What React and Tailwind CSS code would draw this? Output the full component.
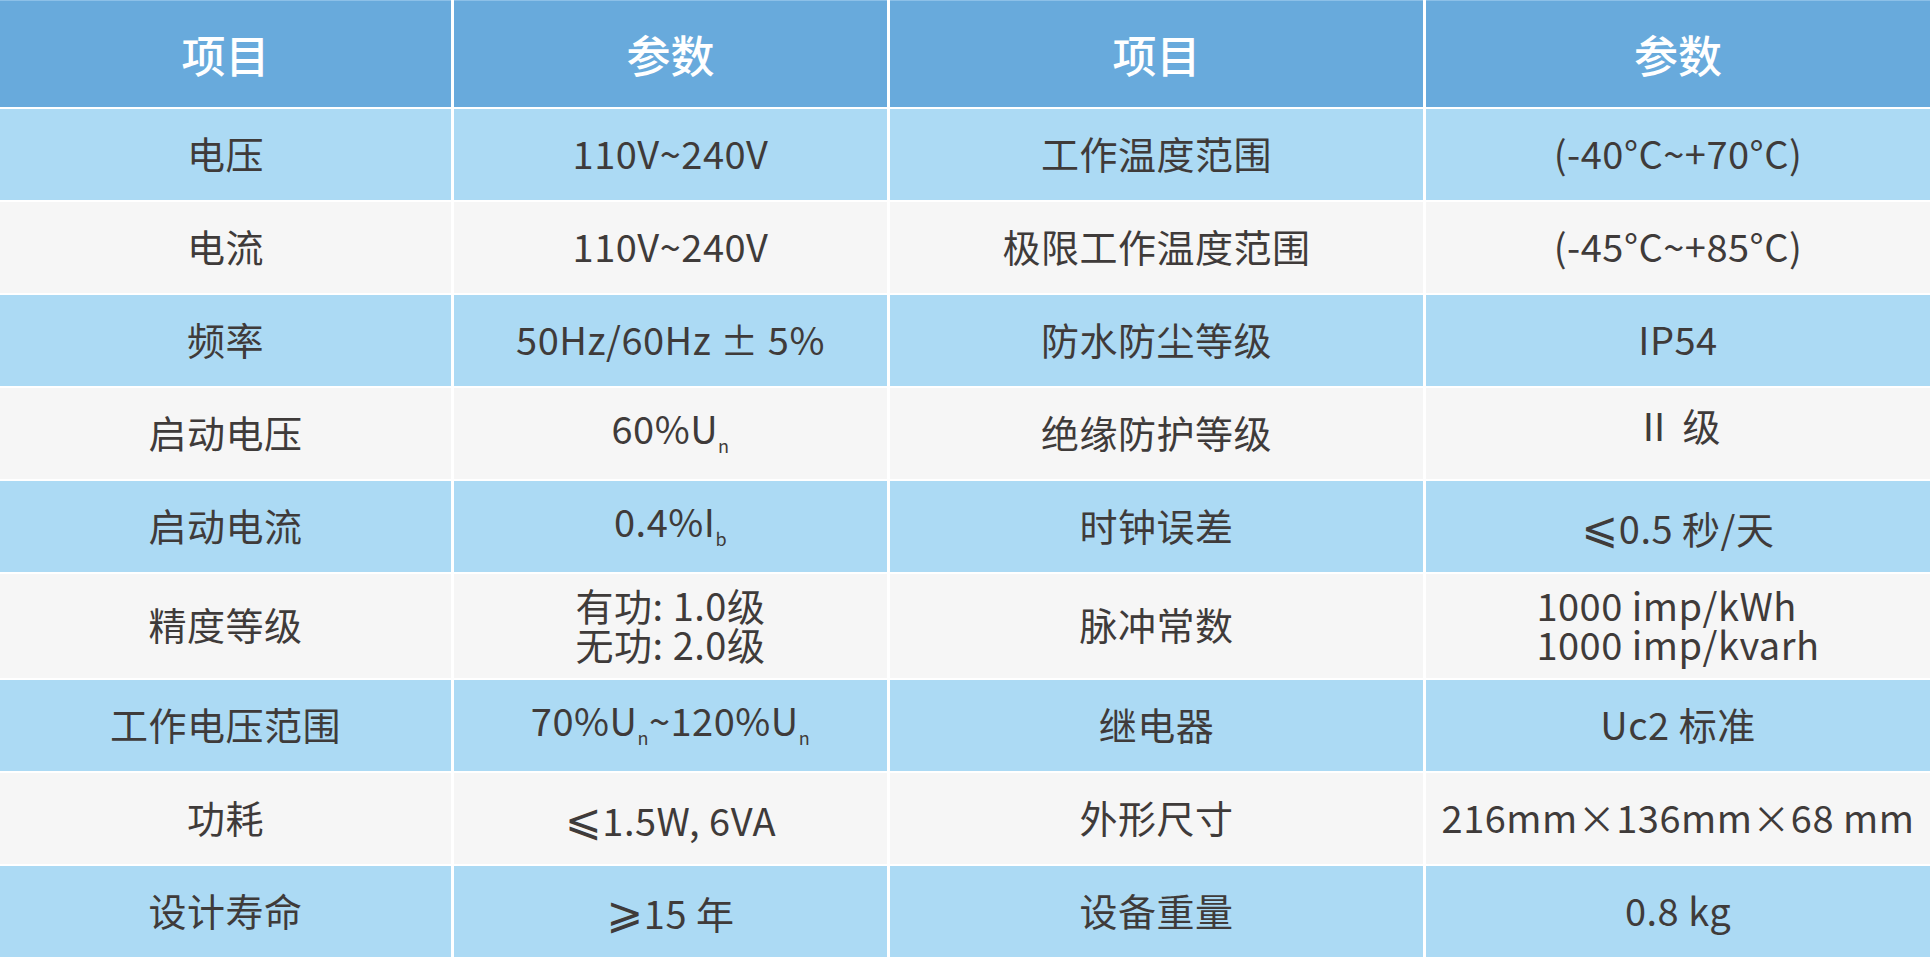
import React from "react";

const Sub = ({ children }) => (
  <span className="text-[18px] align-[-9px] leading-none">{children}</span>
);

const Le = ({ ch }) => (
  <span className="text-[44px] leading-none align-[1px]">{ch}</span>
);

const rows = [
  ["电压", "110V~240V", "工作温度范围", "(-40°C~+70°C)"],
  ["电流", "110V~240V", "极限工作温度范围", "(-45°C~+85°C)"],
  ["频率", "50Hz/60Hz ± 5%", "防水防尘等级", "IP54"],
  [
    "启动电压",
    <span>60%U<Sub>n</Sub></span>,
    "绝缘防护等级",
    <span className="pb-[14px] block">Ⅱ 级</span>,
  ],
  ["启动电流", <span>0.4%I<Sub>b</Sub></span>, "时钟误差", <span><Le ch="⩽" />0.5 秒/天</span>],
  [
    "精度等级",
    <span className="inline-block leading-[39px]">有功: 1.0级<br />无功: 2.0级</span>,
    "脉冲常数",
    <span className="inline-block text-left leading-[39px]">1000 imp/kWh<br />1000 imp/kvarh</span>,
  ],
  [
    "工作电压范围",
    <span>70%U<Sub>n</Sub>~120%U<Sub>n</Sub></span>,
    "继电器",
    "Uc2 标准",
  ],
  ["功耗", <span><Le ch="⩽" />1.5W, 6VA</span>, "外形尺寸", "216mm×136mm×68 mm"],
  ["设计寿命", <span><Le ch="⩾" />15 年</span>, "设备重量", "0.8 kg"],
];

export default function App() {
  return (
    <div
      className="w-[1930px] h-[959px] bg-white"
      style={{ fontFamily: '"Noto Sans CJK SC", "Noto Sans", "DejaVu Sans", sans-serif' }}
    >
      <div className="grid grid-cols-[451px_433px_533px_504px] gap-x-[3px] gap-y-[2px] bg-white">
        {["项目", "参数", "项目", "参数"].map((h, i) => (
          <div
            key={i}
            className="h-[107px] bg-[#68aadc] border-t border-[#8cc0e8] flex items-center justify-center text-white text-[44px] font-medium"
          >
            {h}
          </div>
        ))}
        {rows.map((r, ri) => {
          const bg = ri % 2 === 0 ? "bg-[#acdaf4]" : "bg-[#f6f6f6]";
          const h = ri === 5 ? "h-[104px]" : "h-[91px]";
          return r.map((c, ci) => (
            <div
              key={ri + "-" + ci}
              className={`${bg} ${h} flex items-center justify-center text-center text-[#3f3b3a] text-[38px] tracking-[0.5px] leading-none whitespace-nowrap pb-[4px]`}
            >
              {c}
            </div>
          ));
        })}
      </div>
    </div>
  );
}
